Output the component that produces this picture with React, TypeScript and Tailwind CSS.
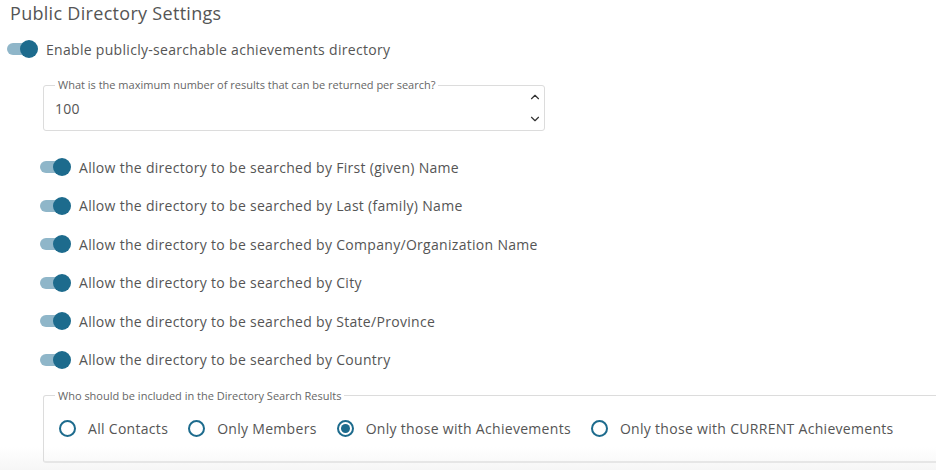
import { ChevronUp, ChevronDown } from "lucide-react";

const searchFields = [
  "First (given) Name",
  "Last (family) Name",
  "Company/Organization Name",
  "City",
  "State/Province",
  "Country",
];

const includeOptions = [
  { label: "All Contacts", checked: false },
  { label: "Only Members", checked: false },
  { label: "Only those with Achievements", checked: true },
  { label: "Only those with CURRENT Achievements", checked: false },
];

function Toggle() {
  return (
    <span className="relative inline-block w-[31px] h-[18px] shrink-0">
      <span className="absolute left-0 right-[2px] top-[3px] h-[12px] rounded-full bg-[#8fb6c9]" />
      <span className="absolute right-0 top-0 w-[18px] h-[18px] rounded-full bg-[#1d6b8d]" />
    </span>
  );
}

function Radio({ checked }: { checked: boolean }) {
  return (
    <span className="w-[17px] h-[17px] rounded-full border-2 border-[#1d6b8d] flex items-center justify-center shrink-0">
      {checked && <span className="w-[9px] h-[9px] rounded-full bg-[#1d6b8d]" />}
    </span>
  );
}

export default function App() {
  return (
    <div
      className="w-[936px] h-[470px] overflow-hidden bg-gradient-to-b from-white from-95% to-[#f6f6f6] text-[#555]"
      style={{ fontFamily: '"Open Sans", "Liberation Sans", sans-serif' }}
    >
      <h1 className="pl-[10px] pt-[1px] text-[18px] leading-[24px] tracking-[0.3px] font-normal text-[#555]">
        Public Directory Settings
      </h1>

      <div className="flex items-center gap-[8px] pl-[7px] mt-[14px] h-[20px]">
        <Toggle />
        <span className="text-[14px] tracking-[0.3px]">Enable publicly-searchable achievements directory</span>
      </div>

      <fieldset className="ml-[43px] mt-[20px] w-[502px] h-[52px] border border-[#dcdcdc] rounded-[3px] pl-[11px] pr-[2px]">
        <legend className="px-[3px] text-[11px] leading-[12px] text-[#666]">
          What is the maximum number of results that can be returned per search?
        </legend>
        <div className="flex items-center justify-between h-[38px] -mt-[2px]">
          <span className="text-[14px] tracking-[0.3px]">100</span>
          <span className="flex flex-col justify-between h-[36px] text-[#333]">
            <ChevronUp size={14} strokeWidth={2} />
            <ChevronDown size={14} strokeWidth={2} />
          </span>
        </div>
      </fieldset>

      <div className="flex flex-col gap-[18.5px] pl-[40px] mt-[26px]">
        {searchFields.map((f) => (
          <div key={f} className="flex items-center gap-[8px] h-[20px]">
            <Toggle />
            <span className="text-[14px] tracking-[0.3px]">Allow the directory to be searched by {f}</span>
          </div>
        ))}
      </div>

      <fieldset className="ml-[43px] mt-[20px] w-[920px] h-[73px] border border-[#dcdcdc] border-b-2 border-b-[#e6e6e6] rounded-[3px] pl-[15px]">
        <legend className="-ml-[4px] px-[3px] text-[11px] leading-[12px] text-[#666]">
          Who should be included in the Directory Search Results
        </legend>
        <div className="flex items-center h-[54px] gap-[20px]">
          {includeOptions.map((o) => (
            <label key={o.label} className="flex items-center gap-[12px]">
              <Radio checked={o.checked} />
              <span className="text-[14px] tracking-[0.3px]">{o.label}</span>
            </label>
          ))}
        </div>
      </fieldset>
    </div>
  );
}
